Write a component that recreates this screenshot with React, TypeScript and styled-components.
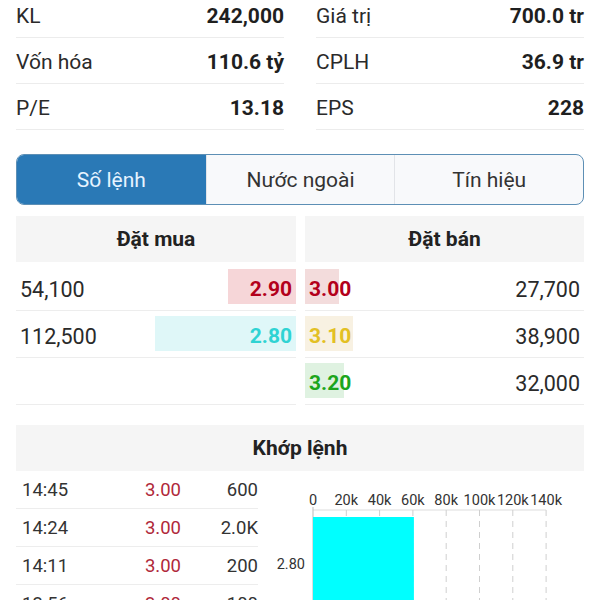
import React from "react";
import styled, { createGlobalStyle } from "styled-components";

const Global = createGlobalStyle`
  html, body { margin: 0; padding: 0; background: #ffffff; }
  body { font-family: Roboto, "Noto Sans", Arial, sans-serif; color: #222; overflow: hidden; }
`;

const Page = styled.div`
  width: 600px;
  height: 600px;
  overflow: hidden;
  padding: 0 16px;
  box-sizing: border-box;
`;

const Stats = styled.div`
  margin-top: -8px;
  display: grid;
  grid-template-columns: 1fr 1fr;
  column-gap: 32px;
`;

const StatRow = styled.div`
  height: 46px;
  box-sizing: border-box;
  padding-top: 2px;
  border-bottom: 1px solid #ececec;
  display: flex;
  align-items: center;
  justify-content: space-between;
  font-size: 21px;
`;

const StatLabel = styled.span`
  color: #2a2a2a;
`;

const StatValue = styled.span`
  font-weight: 700;
  color: #1f1f1f;
`;

const Tabs = styled.div`
  margin-top: 24px;
  height: 51px;
  box-sizing: border-box;
  border: 1.5px solid #5d8fb5;
  border-radius: 8px;
  overflow: hidden;
  display: grid;
  grid-template-columns: 1fr 1fr 1fr;
  background: #f8f9fb;
`;

const Tab = styled.div<{ $active?: boolean }>`
  display: flex;
  align-items: center;
  justify-content: center;
  font-size: 21px;
  color: ${(p) => (p.$active ? "#e6f3ff" : "#333")};
  background: ${(p) => (p.$active ? "#2a79b6" : "transparent")};
  & + & {
    border-left: 1px solid #e2e4e8;
  }
`;

const Book = styled.div`
  margin-top: 11px;
  display: grid;
  grid-template-columns: 280px 279px;
  column-gap: 9px;
`;

const Side = styled.div`
  display: flex;
  flex-direction: column;
`;

const Header = styled.div`
  height: 46px;
  background: #f5f5f5;
  display: flex;
  align-items: center;
  justify-content: center;
  font-weight: 700;
  font-size: 21px;
  color: #222;
  margin-bottom: 2px;
`;

const BookRow = styled.div<{ $reverse?: boolean }>`
  position: relative;
  height: 46px;
  border-bottom: 1px solid #ededed;
  display: flex;
  flex-direction: ${(p) => (p.$reverse ? "row-reverse" : "row")};
  align-items: center;
  justify-content: space-between;
  padding: 0 4px;
  font-size: 21.5px;
`;

const Bar = styled.div<{ $side: "buy" | "sell"; $bg: string }>`
  position: absolute;
  top: 5px;
  bottom: 6px;
  ${(p) => (p.$side === "buy" ? "right: 0;" : "left: 0;")}
  background: ${(p) => p.$bg};
`;

const Vol = styled.span`
  position: relative;
  padding-top: 4px;
  color: #2a2a2a;
`;

const Price = styled.span<{ $color: string }>`
  position: relative;
  padding-top: 4px;
  font-weight: 700;
  font-size: 21px;
  color: ${(p) => p.$color};
`;

const Match = styled.div`
  margin-top: 20px;
`;

const MatchHeader = styled(Header)`
  margin-bottom: 0;
`;

const MatchBody = styled.div`
  display: grid;
  grid-template-columns: 242px 1fr;
`;

const Trades = styled.div`
  display: flex;
  flex-direction: column;
`;

const TradeRow = styled.div`
  height: 37px;
  border-bottom: 1px solid #ededed;
  display: grid;
  grid-template-columns: 70px 89px 77px;
  align-items: center;
  font-size: 18.5px;
  padding-left: 6px;
  color: #333;
`;

const TradePrice = styled.span`
  text-align: right;
  color: #b0283a;
`;

const TradeVol = styled.span`
  text-align: right;
`;

const Chart = styled.svg`
  display: block;
  font-family: Roboto, "Noto Sans", Arial, sans-serif;
`;

const stats = [
  ["KL", "242,000", "Giá trị", "700.0 tr"],
  ["Vốn hóa", "110.6 tỷ", "CPLH", "36.9 tr"],
  ["P/E", "13.18", "EPS", "228"],
];

const buys = [
  { vol: 54100, price: "2.90", color: "#b3001b", bg: "#f6d6d8" },
  { vol: 112500, price: "2.80", color: "#2fd3d3", bg: "#dff7f8" },
  null,
];

const sells = [
  { vol: 27700, price: "3.00", color: "#b3001b", bg: "#f3dcdc" },
  { vol: 38900, price: "3.10", color: "#e3c024", bg: "#f8f1e2" },
  { vol: 32000, price: "3.20", color: "#1ca51c", bg: "#dff2e1" },
];

const trades = [
  ["14:45", "3.00", "600"],
  ["14:24", "3.00", "2.0K"],
  ["14:11", "3.00", "200"],
  ["13:56", "3.00", "100"],
];

const fmt = (n: number) => n.toLocaleString("en-US");

const ticks = ["0", "20k", "40k", "60k", "80k", "100k", "120k", "140k"];
const X0 = 55;
const STEP = 33.3;

export default function App() {
  return (
    <>
      <Global />
      <Page>
        <Stats>
          {stats.map((r) => (
            <React.Fragment key={r[0]}>
              <StatRow>
                <StatLabel>{r[0]}</StatLabel>
                <StatValue>{r[1]}</StatValue>
              </StatRow>
              <StatRow>
                <StatLabel>{r[2]}</StatLabel>
                <StatValue>{r[3]}</StatValue>
              </StatRow>
            </React.Fragment>
          ))}
        </Stats>

        <Tabs>
          <Tab $active>Số lệnh</Tab>
          <Tab>Nước ngoài</Tab>
          <Tab>Tín hiệu</Tab>
        </Tabs>

        <Book>
          <Side>
            <Header>Đặt mua</Header>
            {buys.map((b, i) => (
              <BookRow key={i}>
                {b && (
                  <>
                    <Bar $side="buy" $bg={b.bg} style={{ width: b.vol / 798 }} />
                    <Vol>{fmt(b.vol)}</Vol>
                    <Price $color={b.color}>{b.price}</Price>
                  </>
                )}
              </BookRow>
            ))}
          </Side>
          <Side>
            <Header>Đặt bán</Header>
            {sells.map((s, i) => (
              <BookRow key={i} $reverse>
                <Bar $side="sell" $bg={s.bg} style={{ width: s.vol / 815 }} />
                <Vol>{fmt(s.vol)}</Vol>
                <Price $color={s.color}>{s.price}</Price>
              </BookRow>
            ))}
          </Side>
        </Book>

        <Match>
          <MatchHeader>Khớp lệnh</MatchHeader>
          <MatchBody>
            <Trades>
              {trades.map((t) => (
                <TradeRow key={t[0]}>
                  <span>{t[0]}</span>
                  <TradePrice>{t[1]}</TradePrice>
                  <TradeVol>{t[2]}</TradeVol>
                </TradeRow>
              ))}
            </Trades>
            <Chart width="326" height="140" viewBox="0 0 326 140">
              {ticks.map((t, i) => (
                <text
                  key={t}
                  x={X0 + STEP * i}
                  y={34}
                  fontSize="14.5"
                  fill="#333"
                  textAnchor="middle"
                >
                  {t}
                </text>
              ))}
              <line x1={X0} y1={39} x2={X0 + STEP * 7} y2={39} stroke="#ddd" strokeWidth="1" />
              {ticks.map((t, i) =>
                i === 0 ? null : (
                  <line
                    key={"g" + t}
                    x1={X0 + STEP * i}
                    y1={39}
                    x2={X0 + STEP * i}
                    y2={140}
                    stroke="#cfcfcf"
                    strokeWidth="1"
                    strokeDasharray="6 5"
                  />
                )
              )}
              <line x1={X0} y1={36} x2={X0} y2={140} stroke="#bbb" strokeWidth="1" />
              <rect x={X0} y={46} width={STEP * 3 + 1} height={100} fill="#00ffff" />
              <text x={47} y={98} fontSize="14.5" fill="#333" textAnchor="end">
                2.80
              </text>
            </Chart>
          </MatchBody>
        </Match>
      </Page>
    </>
  );
}
